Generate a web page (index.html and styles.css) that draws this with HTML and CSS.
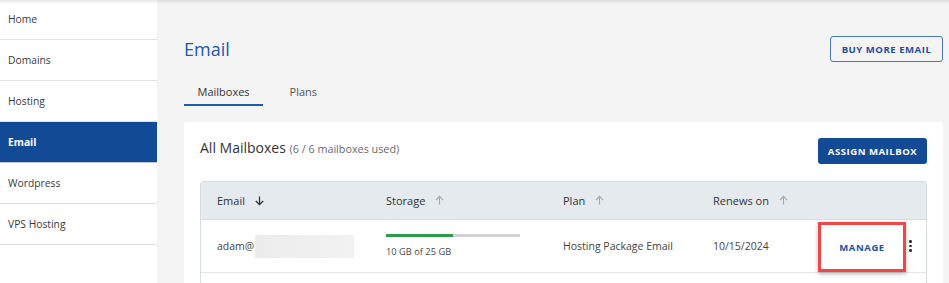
FILE: index.html
```html
<!DOCTYPE html>
<html lang="en">
<head>
<meta charset="utf-8">
<title>Email</title>
<link rel="stylesheet" href="styles.css">
</head>
<body>
<div class="page">
  <div class="top-shadow"></div>
  <nav class="sidebar">
    <a class="nav-item">Home</a>
    <a class="nav-item">Domains</a>
    <a class="nav-item">Hosting</a>
    <a class="nav-item active">Email</a>
    <a class="nav-item">Wordpress</a>
    <a class="nav-item">VPS Hosting</a>
  </nav>
  <main class="main">
    <div class="page-head">
      <h1 class="title">Email</h1>
      <button class="btn-outline">BUY MORE EMAIL</button>
    </div>
    <div class="tabs">
      <div class="tab active">Mailboxes</div>
      <div class="tab">Plans</div>
    </div>
    <section class="card">
      <div class="card-head">
        <div class="card-title">All Mailboxes <span class="muted">(6 / 6 mailboxes used)</span></div>
        <button class="btn-solid">ASSIGN MAILBOX</button>
      </div>
      <div class="table">
        <div class="thead">
          <div class="th">Email
            <svg class="sort dark" viewBox="0 0 12 12"><path d="M6 1.5V10.5M2 6.5L6 10.5L10 6.5" fill="none" stroke="currentColor" stroke-width="1.4"/></svg>
          </div>
          <div class="th">Storage
            <svg class="sort" viewBox="0 0 12 12"><path d="M6 10.5V1.5M2 5.5L6 1.5L10 5.5" fill="none" stroke="currentColor" stroke-width="1.2"/></svg>
          </div>
          <div class="th">Plan
            <svg class="sort" viewBox="0 0 12 12"><path d="M6 10.5V1.5M2 5.5L6 1.5L10 5.5" fill="none" stroke="currentColor" stroke-width="1.2"/></svg>
          </div>
          <div class="th">Renews on
            <svg class="sort" viewBox="0 0 12 12"><path d="M6 10.5V1.5M2 5.5L6 1.5L10 5.5" fill="none" stroke="currentColor" stroke-width="1.2"/></svg>
          </div>
          <div class="th"></div>
        </div>
        <div class="row">
          <div class="td">adam@<span class="redact"></span></div>
          <div class="td storage">
            <div class="bar"><div class="fill" style="width:50%"></div></div>
            <div class="usage">10 GB of 25 GB</div>
          </div>
          <div class="td">Hosting Package Email</div>
          <div class="td">10/15/2024</div>
          <div class="td actions">
            <button class="manage">MANAGE</button>
            <span class="kebab"><i></i><i></i><i></i></span>
          </div>
        </div>
        <div class="row empty"></div>
      </div>
    </section>
  </main>
</div>
</body>
</html>
```

FILE: styles.css
```css
* { box-sizing: border-box; }
html, body { margin: 0; padding: 0; }
body {
  font-family: "Open Sans", "Liberation Sans", sans-serif;
  color: #333;
  background: #f4f4f4;
  width: 949px;
  height: 283px;
  overflow: hidden;
}
.page {
  position: relative;
  display: flex;
  height: 283px;
  overflow: hidden;
}
.top-shadow {
  position: absolute;
  left: 0; right: 0; top: 0;
  height: 4px;
  background: linear-gradient(rgba(0,0,0,0.10), rgba(0,0,0,0));
  z-index: 2;
}
.sidebar {
  width: 157px;
  flex: none;
  background: #fff;
  display: flex;
  flex-direction: column;
  margin-top: -1px;
}
.nav-item {
  display: flex;
  align-items: center;
  height: 41px;
  flex: none;
  padding-left: 8px;
  font-size: 10.3px;
  color: #3a3a3a;
  border-bottom: 1px solid #e2e2e2;
}
.nav-item.active {
  background: #134a96;
  color: #fff;
  font-weight: 700;
  border-bottom-color: #b9c6d8;
}
.main {
  flex: 1;
  display: flex;
  flex-direction: column;
  padding: 36px 6px 0 27px;
  min-width: 0;
  height: 283px;
}
.page-head {
  display: flex;
  justify-content: space-between;
  align-items: center;
  height: 26px;
  flex: none;
}
.title {
  margin: 0;
  font-size: 18px;
  font-weight: 400;
  color: #2159ad;
  line-height: 26px;
}
button {
  font-family: inherit;
  cursor: pointer;
}
.btn-outline {
  width: 113px;
  height: 26px;
  border: 1px solid #4a77bd;
  border-radius: 3px;
  background: transparent;
  color: #1f4f9d;
  font-size: 9.6px;
  font-weight: 700;
  letter-spacing: 0.5px;
  padding: 0;
}
.tabs {
  display: flex;
  margin-top: 19px;
  flex: none;
}
.tab {
  padding: 4px 13.5px 5px;
  font-size: 11px;
  line-height: 14px;
  color: #555;
  border-bottom: 2px solid transparent;
}
.tab.active {
  color: #333;
  border-bottom-color: #2159ad;
}
.tab + .tab { margin-left: 13px; }
.card {
  margin-top: 16px;
  background: #fff;
  border-radius: 4px 4px 0 0;
  padding: 16px 16px 0;
  flex: 1;
  min-height: 0;
  overflow: hidden;
}
.card-head {
  display: flex;
  justify-content: space-between;
  align-items: flex-start;
}
.card-title {
  font-size: 14px;
  line-height: 20px;
  color: #333;
}
.muted {
  font-size: 10.8px;
  color: #6a6a6a;
}
.btn-solid {
  width: 109px;
  height: 26px;
  border: none;
  border-radius: 3px;
  background: #134a96;
  color: #fff;
  font-size: 9.6px;
  font-weight: 700;
  letter-spacing: 0.5px;
  padding: 0;
}
.table {
  margin-top: 17px;
  border: 1px solid #d6dde2;
  border-bottom: none;
  border-radius: 4px 4px 0 0;
}
.thead, .row {
  display: grid;
  grid-template-columns: 169px 177px 150px 113px 1fr;
}
.thead {
  height: 38px;
  background: #e4eaee;
  border-bottom: 1px solid #d6dde2;
  border-radius: 3px 3px 0 0;
}
.th {
  display: flex;
  align-items: center;
  padding-left: 16px;
  font-size: 11px;
  color: #333;
}
.sort {
  width: 11px;
  height: 11px;
  margin-left: 9px;
  color: #a8a8a8;
}
.sort.dark { color: #333; }
.row {
  height: 53px;
  border-bottom: 1px solid #e3e6e8;
}
.row.empty { height: 12px; border-bottom: none; }
.td {
  display: flex;
  align-items: center;
  padding-left: 16px;
  font-size: 10.5px;
  color: #444;
}
.redact {
  display: inline-block;
  width: 99px;
  height: 23px;
  margin-left: 1px;
  background: linear-gradient(90deg, #ececec, #f2f2f2);
}
.storage {
  flex-direction: column;
  align-items: flex-start;
  justify-content: center;
}
.bar {
  width: 134px;
  height: 3px;
  background: #d2d2d2;
}
.fill {
  height: 100%;
  background: #2e9a4e;
}
.usage {
  margin-top: 9px;
  font-size: 9.3px;
  line-height: 12px;
  color: #4a4a4a;
}
.actions {
  padding-left: 8px;
}
.manage {
  width: 88px;
  height: 50px;
  border: 3px solid #f0464a;
  background: #fff;
  color: #1f4f9d;
  font-size: 9.5px;
  font-weight: 700;
  letter-spacing: 0.6px;
  padding: 0;
  box-shadow: 0 2px 4px rgba(0,0,0,0.28);
  margin-top: 2px;
}
.kebab {
  display: flex;
  flex-direction: column;
  gap: 2px;
  margin-left: 3px;
}
.kebab i {
  display: block;
  width: 2.5px;
  height: 2.5px;
  border-radius: 50%;
  background: #333;
}
```
